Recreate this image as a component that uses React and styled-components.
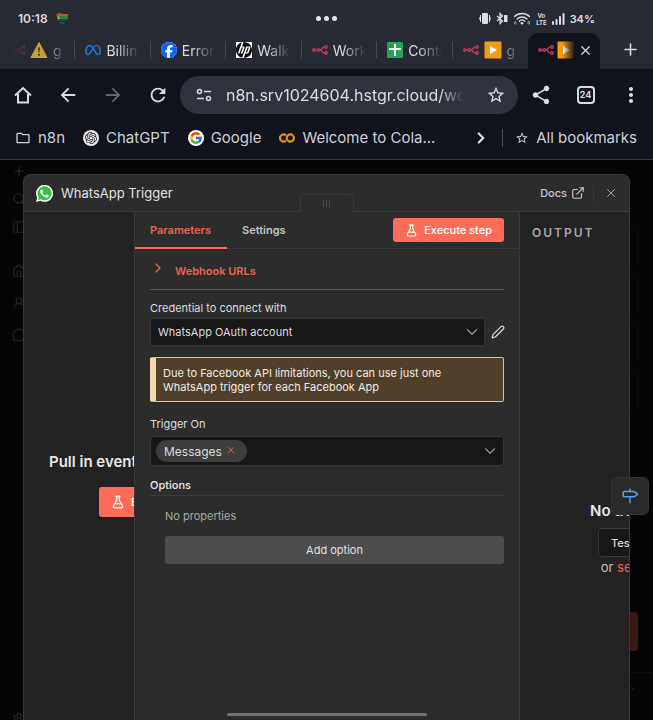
import { useState } from "react";
import styled, { createGlobalStyle, css } from "styled-components";
import {
    ChevronDown,
    ChevronRight,
    ExternalLink,
    FlaskConical,
    House,
    MessageCircle,
    Milestone,
    PanelLeft,
    Pen,
    Plus,
    Search,
    Settings,
    UserRound,
    X,
} from "lucide-react";
import { FaFacebook, FaMeta } from "react-icons/fa6";
import { FcGoogle } from "react-icons/fc";
import { SiGooglecolab, SiHp, SiOpenai } from "react-icons/si";
import {
    MdArrowBack,
    MdArrowForward,
    MdMoreVert,
    MdOutlineFolder,
    MdRefresh,
    MdShare,
    MdStarOutline,
} from "react-icons/md";

export default function App() {
    return (
        <Screen>
            <GlobalStyle />
            <StatusBar />
            <TabStrip />
            <Toolbar />
            <Bookmarks />
            <Page>
                <Workspace />
                <NodeDialog />
                <HelpButton aria-label="Guide">
                    <Milestone size={18} />
                </HelpButton>
            </Page>
            <HomeIndicator />
        </Screen>
    );
}

function StatusBar() {
    return (
        <StatusRow>
            <StatusSide>
                <Clock>10:18</Clock>
                <FlagIcon />
            </StatusSide>
            <CameraDots>
                <i />
                <i />
                <i />
            </CameraDots>
            <StatusSide $end>
                <VibrateIcon />
                <BluetoothIcon />
                <WifiIcon />
                <Volte>
                    <span>Vo</span>
                    <span>LTE</span>
                </Volte>
                <SignalIcon />
                <Battery>34%</Battery>
            </StatusSide>
        </StatusRow>
    );
}

function TabStrip() {
    return (
        <Strip>
            <Tab>
                <FadedIcon>
                    <N8nIcon />
                </FadedIcon>
                <WarningIcon />
                <TabTitle $dim>g</TabTitle>
            </Tab>
            <Tab>
                <FaMeta size={16} color="#1877d8" />
                <TabTitle>Billing</TabTitle>
            </Tab>
            <Tab>
                <RoundLogo $bg="#fff">
                    <FaFacebook size={16} color="#0866ff" />
                </RoundLogo>
                <TabTitle>Errors</TabTitle>
            </Tab>
            <Tab>
                <SquareLogo>
                    <SiHp size={16} color="#0b0b0b" />
                </SquareLogo>
                <TabTitle>Walk</TabTitle>
            </Tab>
            <Tab>
                <N8nIcon />
                <TabTitle>Work</TabTitle>
            </Tab>
            <Tab>
                <SheetIcon />
                <TabTitle>Conte</TabTitle>
            </Tab>
            <Tab $last>
                <N8nIcon />
                <PlayIcon />
                <TabTitle $dim>g</TabTitle>
            </Tab>
            <ActiveTab>
                <N8nIcon />
                <FadedPlay>
                    <PlayIcon />
                </FadedPlay>
                <IconButton aria-label="Close tab">
                    <X size={15} />
                </IconButton>
            </ActiveTab>
            <NewTab aria-label="New tab">
                <Plus size={19} />
            </NewTab>
        </Strip>
    );
}

function Toolbar() {
    const [url, setUrl] = useState("n8n.srv1024604.hstgr.cloud/workflow");

    return (
        <ToolbarRow>
            <IconButton aria-label="Home">
                <HomeIcon />
            </IconButton>
            <IconButton aria-label="Back">
                <MdArrowBack size={22} />
            </IconButton>
            <IconButton aria-label="Forward" $dim>
                <MdArrowForward size={22} />
            </IconButton>
            <IconButton aria-label="Reload">
                <MdRefresh size={22} />
            </IconButton>
            <AddressBox>
                <TuneIcon />
                <AddressInput
                    aria-label="Address"
                    value={url}
                    onChange={(e) => setUrl(e.target.value)}
                />
                <IconButton aria-label="Bookmark page">
                    <MdStarOutline size={20} />
                </IconButton>
            </AddressBox>
            <IconButton aria-label="Share">
                <MdShare size={22} />
            </IconButton>
            <IconButton aria-label="Open tabs">
                <TabCount>24</TabCount>
            </IconButton>
            <IconButton aria-label="More">
                <MdMoreVert size={24} />
            </IconButton>
        </ToolbarRow>
    );
}

function Bookmarks() {
    return (
        <BookmarkBar>
            <Bookmark href="#n8n">
                <MdOutlineFolder size={16} />
                n8n
            </Bookmark>
            <Bookmark href="#chatgpt">
                <RoundLogo $bg="#e9e9ec">
                    <SiOpenai size={12} color="#26262a" />
                </RoundLogo>
                ChatGPT
            </Bookmark>
            <Bookmark href="#google">
                <RoundLogo $bg="#fff">
                    <FcGoogle size={14} />
                </RoundLogo>
                Google
            </Bookmark>
            <Bookmark href="#colab">
                <SiGooglecolab size={16} color="#e8940c" />
                Welcome to Cola...
            </Bookmark>
            <BookmarkEnd>
                <IconButton aria-label="More bookmarks">
                    <ChevronRight size={18} strokeWidth={3} />
                </IconButton>
                <BarDivider />
                <Bookmark href="#all">
                    <MdStarOutline size={14} />
                    All bookmarks
                </Bookmark>
            </BookmarkEnd>
        </BookmarkBar>
    );
}

function Workspace() {
    return (
        <WorkspaceGrid aria-hidden="true">
            <SideNav>
                <Plus size={14} />
                <Search size={14} />
                <PanelLeft size={14} />
                <NavGroup>
                    <House size={14} />
                    <UserRound size={14} />
                    <MessageCircle size={14} />
                </NavGroup>
                <NavFoot>
                    <Settings size={14} />
                </NavFoot>
            </SideNav>
            <CardList>
                <Card />
                <Card />
                <Card />
                <Card />
                <DimPrimary />
                <DimRow>
                    <ChevronDown size={10} />
                </DimRow>
            </CardList>
        </WorkspaceGrid>
    );
}

function NodeDialog() {
    return (
        <Dialog role="dialog" aria-label="WhatsApp Trigger">
            <DialogHeader>
                <WhatsAppIcon />
                <DialogTitle>WhatsApp Trigger</DialogTitle>
                <DocsLink href="#docs">
                    Docs
                    <ExternalLink size={14} />
                </DocsLink>
                <HeaderDivider />
                <IconButton aria-label="Close">
                    <X size={14} strokeWidth={1.5} />
                </IconButton>
                <DragHandle>
                    <i />
                    <i />
                    <i />
                </DragHandle>
            </DialogHeader>
            <Panels>
                <SidePanel>
                    <EmptyState $left="25px" $top="36px">
                        <EmptyTitle>Pull in events from WhatsApp</EmptyTitle>
                        <PrimaryButton $large>
                            <FlaskConical size={14} />
                            Execute step
                        </PrimaryButton>
                    </EmptyState>
                </SidePanel>
                <Parameters />
                <SidePanel>
                    <PanelTitle>OUTPUT</PanelTitle>
                    <EmptyState $left="70px" $top="144px">
                        <EmptyTitle>No trigger output</EmptyTitle>
                        <DarkButton>Test this trigger</DarkButton>
                        <Hint>
                            or <a href="#mock">set mock data</a>
                        </Hint>
                    </EmptyState>
                </SidePanel>
            </Panels>
        </Dialog>
    );
}

function Parameters() {
    return (
        <MainPanel>
            <PanelTabs>
                <PanelTab $active>Parameters</PanelTab>
                <PanelTab>Settings</PanelTab>
                <PrimaryButton>
                    <FlaskConical size={13} />
                    Execute step
                </PrimaryButton>
            </PanelTabs>
            <Form>
                <WebhookToggle>
                    <ChevronRight size={16} />
                    <span>Webhook URLs</span>
                </WebhookToggle>
                <Label htmlFor="credential">Credential to connect with</Label>
                <CredentialRow>
                    <SelectBox>
                        <Select id="credential">
                            <option>WhatsApp OAuth account</option>
                        </Select>
                        <ChevronDown size={18} strokeWidth={1.5} />
                    </SelectBox>
                    <IconButton aria-label="Edit credential">
                        <Pen size={14} />
                    </IconButton>
                </CredentialRow>
                <Notice>
                    Due to Facebook API limitations, you can use just one
                    <br />
                    WhatsApp trigger for each Facebook App
                </Notice>
                <Label as="span">Trigger On</Label>
                <MultiSelect>
                    <Chip>
                        Messages
                        <ChipRemove aria-label="Remove Messages">
                            <X size={10} />
                        </ChipRemove>
                    </Chip>
                    <IconButton aria-label="Show events">
                        <ChevronDown size={18} strokeWidth={1.5} />
                    </IconButton>
                </MultiSelect>
                <SectionTitle>Options</SectionTitle>
                <OptionList>
                    <p>No properties</p>
                    <AddButton>Add option</AddButton>
                </OptionList>
            </Form>
        </MainPanel>
    );
}

function FlagIcon() {
    return (
        <svg width="13" height="12" viewBox="0 0 13 12">
            <path d="M0 1l5-1 1 1h6v2H1z" fill="#b5563c" />
            <path d="M1 3h11v3H2z" fill="#2f7d43" />
            <path d="M1 2l3 3-2 3z" fill="#c5a044" />
            <path d="M2 6h9v2H3z" fill="#1d4f36" />
            <path d="M3 9h6l-1 2H4z" fill="#27477c" />
        </svg>
    );
}

function VibrateIcon() {
    return (
        <svg width="12" height="13" viewBox="0 0 12 13" fill="#dcdde3">
            <rect x="3" y="1" width="6" height="11" rx="1" />
            <path d="M1 3h1v7H1zM10 3h1v7h-1zM0 5h.6v3H0zM11.4 5h.6v3h-.6z" />
        </svg>
    );
}

function BluetoothIcon() {
    return (
        <svg width="12" height="13" viewBox="0 0 12 13">
            <path
                d="M1 4l5.500 5L4 11.500v-10L6.500 4 1 9"
                fill="none"
                stroke="#dcdde3"
                strokeWidth="1.300"
            />
            <rect x="8" y="3" width="3.500" height="7" rx="0.600" fill="#dcdde3" />
        </svg>
    );
}

function WifiIcon() {
    return (
        <svg width="18" height="13" viewBox="0 0 18 13">
            <g fill="none" stroke="#dcdde3" strokeWidth="1.300" strokeLinecap="round">
                <path d="M1.500 4.500c4.200-4 10.800-4 15 0" />
                <path d="M4 7c2.900-2.700 7.100-2.700 10 0" />
                <path d="M6.300 9.200c1.600-1.500 3.800-1.500 5.400 0" />
            </g>
            <circle cx="9" cy="11.200" r="1.300" fill="#dcdde3" />
            <path
                d="M3 9.200C1.500 9.500 1 11 1.500 11.800c.5.800 2 .6 2-.5 0-.9-1.400-1-2-.2M15 9.500h1.500v2.500H15z"
                fill="none"
                stroke="#b9bac1"
                strokeWidth="0.700"
            />
        </svg>
    );
}

function SignalIcon() {
    return (
        <svg width="13" height="12" viewBox="0 0 13 12" fill="#dcdde3">
            <rect x="0" y="8" width="2" height="4" rx="1" />
            <rect x="3.500" y="6" width="2" height="6" rx="1" />
            <rect x="7" y="3" width="2" height="9" rx="1" />
            <rect x="10.500" y="0" width="2" height="12" rx="1" />
        </svg>
    );
}

function N8nIcon() {
    return (
        <svg width="16" height="10" viewBox="0 0 32 20" fill="none" stroke="#b93a57" strokeWidth="3">
            <circle cx="4" cy="10" r="2.500" />
            <circle cx="13" cy="10" r="2.500" />
            <circle cx="28" cy="4" r="2.500" />
            <circle cx="28" cy="16" r="2.500" />
            <path d="M6.500 10h4M15.500 10c6 0 3-6 10-6M15.500 10c6 0 3 6 10 6" />
        </svg>
    );
}

function WarningIcon() {
    return (
        <svg width="18" height="18" viewBox="0 0 18 18">
            <path d="M9 1.500L17 16.500H1z" fill="#c9a136" stroke="#c9a136" strokeLinejoin="round" />
            <path d="M8.200 6.500h1.600l-.3 5h-1z" fill="#29251a" />
            <circle cx="9" cy="13.800" r="1" fill="#29251a" />
        </svg>
    );
}

function SheetIcon() {
    return (
        <svg width="16" height="16" viewBox="0 0 16 16">
            <rect width="16" height="16" rx="1" fill="#23a455" />
            <path d="M7 2h2v4h5v2H9v6H7V8H2V6h5z" fill="#fff" />
        </svg>
    );
}

function PlayIcon() {
    return (
        <svg width="18" height="18" viewBox="0 0 18 18">
            <rect x="0.500" y="0.500" width="17" height="17" rx="1" fill="#f59b13" />
            <path d="M6 4.800v8.400L13 9z" fill="#fff" />
        </svg>
    );
}

function HomeIcon() {
    return (
        <svg width="18" height="18" viewBox="0 0 18 18" fill="none" stroke="currentColor" strokeWidth="2">
            <path d="M1 9.500L9 2l8 7.500M4 8v8.500h10V8" />
        </svg>
    );
}

function TuneIcon() {
    return (
        <svg width="16" height="14" viewBox="0 0 16 14" fill="none" stroke="#d5d6dd" strokeWidth="1.600">
            <circle cx="3.500" cy="3.500" r="2" />
            <circle cx="12.500" cy="10.500" r="2" />
            <path d="M8 3.500h7M1 10.500h7" />
        </svg>
    );
}

function WhatsAppIcon() {
    return (
        <svg width="17" height="17" viewBox="0 0 24 24">
            <path d="M0 24l1.700-6.200A12 12 0 1 1 6.300 22.300z" fill="#fff" />
            <path d="M2.800 21.200l1.100-3.900A9.900 9.900 0 1 1 7 20.200z" fill="#35c04c" />
            <path
                fill="#fff"
                d="M17.472 14.382c-.297-.149-1.758-.867-2.030-.967-.273-.099-.471-.148-.670.150-.197.297-.767.966-.940 1.164-.173.199-.347.223-.644.075-.297-.150-1.255-.463-2.390-1.475-.883-.788-1.480-1.761-1.653-2.059-.173-.297-.018-.458.130-.606.134-.133.298-.347.446-.520.149-.174.198-.298.298-.497.099-.198.050-.371-.025-.520-.075-.149-.669-1.612-.916-2.207-.242-.579-.487-.500-.669-.510-.173-.008-.371-.010-.570-.010-.198 0-.520.074-.792.372-.272.297-1.040 1.016-1.040 2.479 0 1.462 1.065 2.875 1.213 3.074.149.198 2.096 3.200 5.077 4.487.709.306 1.262.489 1.694.625.712.227 1.360.195 1.871.118.571-.085 1.758-.719 2.006-1.413.248-.694.248-1.289.173-1.413-.074-.124-.272-.198-.570-.347"
            />
        </svg>
    );
}

const GlobalStyle = createGlobalStyle`
    * {
        box-sizing: border-box;
    }

    body {
        margin: 0;
        background: #050505;
        color: #dcdce0;
        font-family: Inter, "Liberation Sans", sans-serif;
        font-size: 11px;
    }

    button, input, select {
        font: inherit;
        color: inherit;
    }

    button {
        padding: 0;
        border: none;
        background: none;
        cursor: pointer;
    }

    svg {
        flex-shrink: 0;
    }
`;

const Screen = styled.div`
    height: 100vh;
    display: flex;
    flex-direction: column;
    overflow: hidden;
`;

const StatusRow = styled.header`
    height: 33px;
    padding: 4px 58px 0 18px;
    display: grid;
    grid-template-columns: 1fr auto 1fr;
    align-items: center;
    background: #272933;
`;

const StatusSide = styled.div`
    display: flex;
    align-items: center;
    gap: ${({ $end }) => ($end ? "5px" : "8px")};
    justify-content: ${({ $end }) => ($end ? "flex-end" : "flex-start")};
`;

const Clock = styled.time`
    font-size: 12px;
    font-weight: 600;
`;

const Battery = styled.span`
    font-weight: 600;
`;

const Volte = styled.span`
    display: flex;
    flex-direction: column;
    align-items: center;
    font-size: 6px;
    line-height: 7px;
    font-weight: 700;
`;

const CameraDots = styled.div`
    display: flex;
    gap: 3px;
    padding-left: 40px;

    i {
        width: 5px;
        height: 5px;
        border-radius: 50%;
        background: #e4e4ea;
    }
`;

const Strip = styled.nav`
    height: 36px;
    display: grid;
    grid-template-columns: repeat(7, minmax(0, 1fr)) 72px 53px;
    background: #272933;
`;

const Tab = styled.div`
    height: 18px;
    margin-top: 8px;
    padding-left: 10px;
    display: flex;
    align-items: center;
    gap: 5px;
    min-width: 0;
    border-right: ${({ $last }) => ($last ? "none" : "1px solid #484a55")};
`;

const fadeRight = css`
    mask-image: linear-gradient(to right, #000 30%, transparent);
`;

const TabTitle = styled.span`
    flex: 1;
    margin-right: 10px;
    min-width: 0;
    overflow: hidden;
    white-space: nowrap;
    font-size: 14px;
    opacity: ${({ $dim }) => ($dim ? 0.5 : 1)};
    ${fadeRight}
`;

const FadedIcon = styled.span`
    width: 15px;
    display: flex;
    opacity: 0.4;
    mask-image: linear-gradient(to left, #000, transparent);
`;

const FadedPlay = styled.span`
    display: flex;
    ${fadeRight}
`;

const ActiveTab = styled.div`
    padding: 0 7px 2px 10px;
    display: flex;
    align-items: center;
    justify-content: space-between;
    border-radius: 10px 10px 0 0;
    background: #10121c;
`;

const IconButton = styled.button`
    display: flex;
    align-items: center;
    justify-content: center;
    color: ${({ $dim }) => ($dim ? "#63656e" : "inherit")};
`;

const NewTab = styled(IconButton)`
    padding: 0 0 4px 7px;
`;

const ToolbarRow = styled.div`
    padding: 7px 0 6px;
    display: grid;
    grid-template-columns: repeat(4, 45px) minmax(0, 1fr) repeat(3, 45px);
    background: #10121c;
`;

const AddressBox = styled.div`
    height: 38px;
    padding: 0 12px 0 16px;
    display: flex;
    align-items: center;
    gap: 14px;
    border-radius: 19px;
    background: #30323d;
`;

const AddressInput = styled.input`
    flex: 1;
    min-width: 0;
    margin-right: 8px;
    padding: 0;
    border: none;
    outline: none;
    background: none;
    font-size: 16px;
    mask-image: linear-gradient(to right, #000 90%, transparent);
`;

const TabCount = styled.span`
    width: 18px;
    height: 18px;
    border: 2px solid #dcdce0;
    border-radius: 4px;
    font-size: 9px;
    line-height: 14px;
    font-weight: 700;
`;

const BookmarkBar = styled.nav`
    height: 40px;
    padding: 0 16px 4px 15px;
    display: flex;
    align-items: center;
    gap: 18px;
    border-bottom: 1px solid #34353c;
    background: #10121c;
`;

const Bookmark = styled.a`
    display: flex;
    align-items: center;
    gap: 7px;
    white-space: nowrap;
    font-size: 15px;
    color: #cfd0d8;
    text-decoration: none;
`;

const BookmarkEnd = styled.div`
    margin-left: auto;
    display: flex;
    align-items: center;
    gap: 12px;
`;

const BarDivider = styled.span`
    width: 1px;
    height: 18px;
    background: #484a55;
`;

const RoundLogo = styled.span`
    width: 16px;
    height: 16px;
    display: flex;
    align-items: center;
    justify-content: center;
    border-radius: 50%;
    background: ${({ $bg }) => $bg};
`;

const SquareLogo = styled.span`
    display: flex;
    background: #fff;
`;

const Page = styled.main`
    position: relative;
    flex: 1;
    min-height: 0;
    background: #050505;
`;

const WorkspaceGrid = styled.div`
    height: 100%;
    display: grid;
    grid-template-columns: 40px 1fr;
    color: #262626;
`;

const SideNav = styled.div`
    padding: 4px 0 0 12px;
    display: flex;
    flex-direction: column;
    gap: 14px;
`;

const NavGroup = styled.div`
    margin-top: 16px;
    display: flex;
    flex-direction: column;
    gap: 18px;
`;

const NavFoot = styled.div`
    margin-top: auto;
    height: 8px;
`;

const CardList = styled.div`
    padding: 66px 15px 0 0;
    display: flex;
    flex-direction: column;
    gap: 8px;
`;

const Card = styled.div`
    height: 40px;
    border: 1px solid #0c0c0c;
    border-radius: 4px;
`;

const DimPrimary = styled.div`
    height: 39px;
    margin-top: auto;
    border-radius: 4px;
    background: #3a1714;
`;

const DimRow = styled.div`
    height: 48px;
    margin: 13px -15px 0 0;
    padding: 10px 15px;
    display: flex;
    justify-content: flex-end;
    border-top: 1px solid #0e0e0e;
`;

// the editor dialog floats above the dimmed workspace
const Dialog = styled.section`
    position: absolute;
    inset: 14px 23px 0 23px;
    display: flex;
    flex-direction: column;
    overflow: hidden;
    border: 1px solid #3a3a3a;
    border-bottom: none;
    border-radius: 8px 8px 0 0;
    background: #2c2c2c;
`;

const DialogHeader = styled.div`
    position: relative;
    height: 37px;
    padding: 0 11px 0 12px;
    display: flex;
    align-items: center;
    border-bottom: 1px solid #3a3a3a;
    color: #b4b4b4;
`;

const DialogTitle = styled.h1`
    margin: 0 auto 0 8px;
    font-size: 13px;
    font-weight: 400;
    color: #e2e2e2;
`;

const DocsLink = styled.a`
    display: flex;
    align-items: center;
    gap: 4px;
    font-weight: 500;
    color: #c8c8c8;
    text-decoration: none;
`;

const HeaderDivider = styled.span`
    width: 1px;
    height: 15px;
    margin: 0 10px 0 8px;
    background: #3a3a3a;
`;

const DragHandle = styled.div`
    position: absolute;
    left: 50%;
    bottom: -1px;
    width: 54px;
    height: 18px;
    margin-left: -27px;
    display: flex;
    align-items: center;
    justify-content: center;
    gap: 2px;
    border: 1px solid #3a3a3a;
    border-bottom: none;
    border-radius: 4px 4px 0 0;
    background: #2c2c2c;

    i {
        width: 1px;
        height: 7px;
        background: #4a4a4a;
    }
`;

const Panels = styled.div`
    flex: 1;
    min-height: 0;
    display: grid;
    grid-template-columns: 110px minmax(0, 1fr) 109px;
`;

const SidePanel = styled.div`
    min-width: 0;
    overflow: hidden;
    display: flex;
    flex-direction: column;
    background: #222;
`;

const PanelTitle = styled.h2`
    margin: 14px 0 -28px 12px;
    font-size: 12px;
    line-height: 14px;
    font-weight: 600;
    letter-spacing: 2px;
    color: #a8a8a8;
`;

const EmptyState = styled.div`
    width: max-content;
    margin: auto 0;
    padding: ${({ $top, $left }) => `${$top} 0 0 ${$left}`};
    display: flex;
    flex-direction: column;
    align-items: center;
`;

const EmptyTitle = styled.h3`
    margin: 0;
    font-size: 15px;
    font-weight: 600;
    color: #e8e8e8;
`;

const PrimaryButton = styled.button`
    height: ${({ $large }) => ($large ? "30px" : "24px")};
    margin: ${({ $large }) => ($large ? "16px 0 0" : "0 0 0 auto")};
    padding: ${({ $large }) => ($large ? "0 14px 0 12px" : "0 12px")};
    display: flex;
    align-items: center;
    gap: 6px;
    border-radius: 3px;
    background: #ff6d5a;
    color: #fff;
    font-weight: 500;
`;

const DarkButton = styled.button`
    height: 29px;
    margin: 8px 0 2px;
    padding: 0 12px;
    border: 1px solid #3a3a3a;
    border-radius: 4px;
    background: #171717;
    font-weight: 500;
`;

const Hint = styled.p`
    margin: 0;
    font-size: 13px;
    color: #c0c0c0;

    a {
        color: #ec6353;
        text-decoration: none;
    }
`;

const MainPanel = styled.div`
    border: 1px solid #3a3a3a;
    border-width: 0 1px;
`;

const PanelTabs = styled.div`
    height: 37px;
    padding-right: 15px;
    display: flex;
    align-items: center;
    border-bottom: 1px solid #3a3a3a;
`;

const PanelTab = styled.button`
    align-self: stretch;
    margin-bottom: -1px;
    padding: 0 16px 0 15px;
    border-bottom: 2px solid ${({ $active }) => ($active ? "#ff6d5a" : "transparent")};
    font-weight: 600;
    color: ${({ $active }) => ($active ? "#ec6353" : "#c4c4c4")};
`;

const Form = styled.div`
    padding: 0 15px;
    display: flex;
    flex-direction: column;
`;

const WebhookToggle = styled.button`
    height: 41px;
    padding-top: 4px;
    display: flex;
    align-items: center;
    gap: 9px;
    border-bottom: 1px solid #5c5c5c;
    font-weight: 600;
    color: #ec6353;

    svg {
        margin-bottom: 6px;
    }
`;

const Label = styled.label`
    margin: 11px 0 2px;
    line-height: 15px;
    color: #dcdcdc;
`;

const CredentialRow = styled.div`
    display: grid;
    grid-template-columns: minmax(0, 1fr) 13px;
    gap: 6px;
`;

const SelectBox = styled.div`
    display: grid;
    align-items: center;

    > * {
        grid-area: 1 / 1;
    }

    svg {
        justify-self: end;
        margin-right: 4px;
        color: #9a9a9a;
        pointer-events: none;
    }
`;

const field = css`
    border: 1px solid #363636;
    border-radius: 3px;
    background: #171717;
`;

const Select = styled.select`
    width: 100%;
    height: 28px;
    padding: 0 7px;
    appearance: none;
    ${field}
`;

const Notice = styled.div`
    margin: 11px 0 4px;
    padding: 8px 7px 7px;
    border: 1px solid #e2c596;
    border-left: 6px solid #f5d9ad;
    border-radius: 2px;
    background: #4f3f2b;
    line-height: 14px;
    color: #f0ebe4;
`;

const MultiSelect = styled.div`
    height: 30px;
    margin-top: 2px;
    padding: 0 4px 0 5px;
    display: flex;
    align-items: center;
    justify-content: space-between;
    color: #9a9a9a;
    ${field}
`;

const Chip = styled.span`
    height: 22px;
    padding: 0 11px 0 8px;
    display: flex;
    align-items: center;
    gap: 4px;
    border-radius: 11px;
    background: #3d3d3d;
    font-size: 12px;
    color: #dcdcdc;
`;

const ChipRemove = styled.button`
    display: flex;
    margin-bottom: 3px;
    color: #ec6353;
`;

const SectionTitle = styled.h2`
    margin: 12px 0 13px;
    padding-bottom: 2px;
    border-bottom: 1px solid #3d3d3d;
    font-size: 11px;
    line-height: 15px;
    font-weight: 500;
    color: #e8e8e8;
`;

const OptionList = styled.div`
    padding-left: 15px;
    display: flex;
    flex-direction: column;
    gap: 12px;

    p {
        margin: 0;
        line-height: 15px;
        color: #a8a8a8;
    }
`;

const AddButton = styled.button`
    height: 28px;
    border-radius: 3px;
    background: #4d4d4d;
    color: #e2e2e2;
`;

const HelpButton = styled.button`
    position: absolute;
    right: 4px;
    bottom: 205px;
    width: 38px;
    height: 38px;
    display: flex;
    align-items: center;
    justify-content: center;
    border: 1px solid #363636;
    border-radius: 6px;
    background: #2a2a2a;
    color: #5a9ee8;
`;

const HomeIndicator = styled.div`
    position: fixed;
    left: 50%;
    bottom: 4px;
    width: 200px;
    height: 3px;
    margin-left: -100px;
    border-radius: 2px;
    background: #707070;
`;
